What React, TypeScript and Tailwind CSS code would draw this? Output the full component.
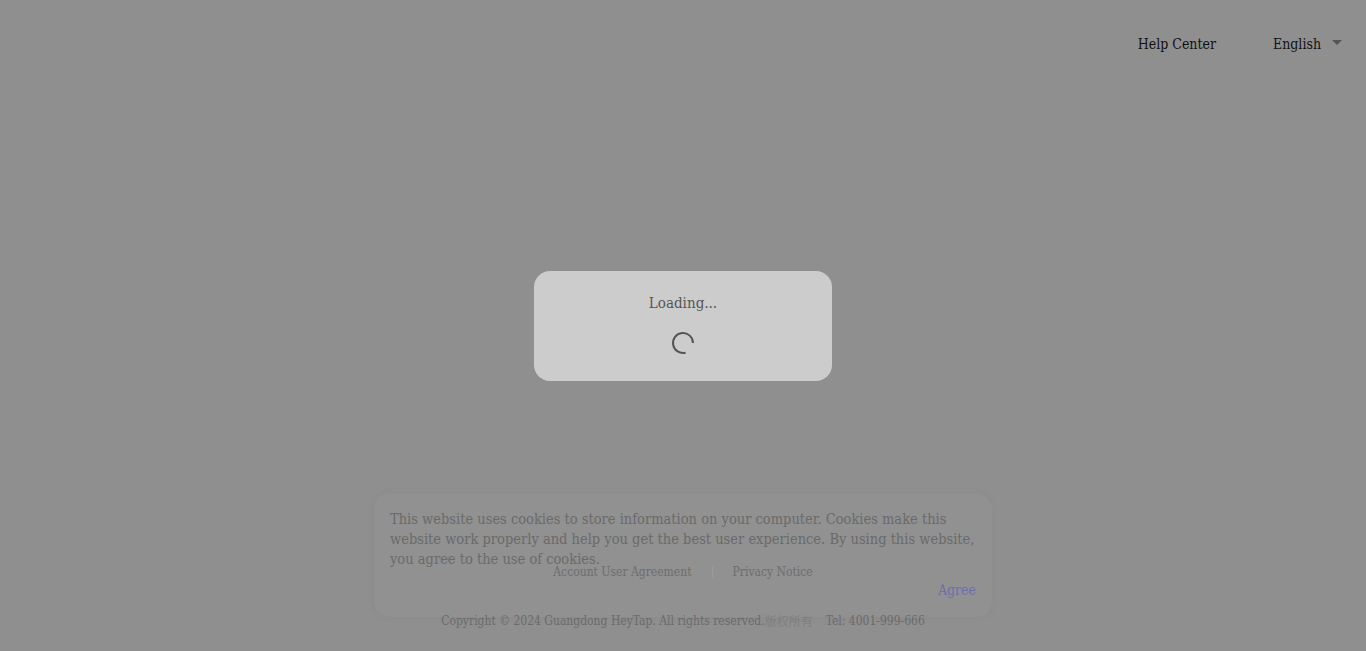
export default function App() {
  return (
    <div className="relative w-full h-[651px] overflow-hidden bg-[#8f8f8f] flex flex-col font-['DejaVu_Serif_Condensed','DejaVu_Serif',serif] font-stretch-condensed">
      <header className="flex items-center justify-end h-[88px] pr-[24px]">
        <span className="text-[14px] text-[#111] mr-[57px]">Help Center</span>
        <span className="text-[14px] text-[#111] mr-[11px]">English</span>
        <span className="w-0 h-0 border-l-[5px] border-r-[5px] border-t-[5px] border-l-transparent border-r-transparent border-t-[#555] -mt-[3px]" />
      </header>

      <main className="flex-1" />

      <footer className="flex flex-col items-center pb-[21px] text-[12px] text-[#6b6b6b]">
        <div className="flex items-center mb-[31px]">
          <span>Account User Agreement</span>
          <span className="mx-[20px] h-[12px] w-px bg-[#9a9a9a]" />
          <span>Privacy Notice</span>
        </div>
        <div className="flex items-center">
          <span>Copyright © 2024 Guangdong HeyTap. All rights reserved.</span>
          <span className="text-[#808080] font-['Noto_Sans_CJK_SC',sans-serif]">版权所有</span>
          <span className="ml-[13px]">Tel: 4001-999-666</span>
        </div>
      </footer>

      {/* cookie banner */}
      <div className="absolute left-1/2 -translate-x-1/2 bottom-[34px] w-[618px] h-[124px] rounded-[16px] bg-white/[0.02] shadow-[0_0_10px_rgba(0,0,0,0.04)] px-[16px] pt-[16px]">
        <p className="text-[14.5px] leading-[20px] text-[#6a6a6a]">
          This website uses cookies to store information on your computer. Cookies make this website work properly and help you get the best user experience. By using this website, you agree to the use of cookies.
        </p>
        <div className="flex justify-end mt-[11px]">
          <span className="text-[14px] text-[#6d70a6]">Agree</span>
        </div>
      </div>

      {/* loading dialog */}
      <div className="absolute left-1/2 top-1/2 -translate-x-1/2 -translate-y-1/2 w-[298px] h-[110px] rounded-[16px] bg-[#cccccc] flex flex-col items-center pt-[21px]">
        <span className="text-[15px] text-[#555]">Loading...</span>
        <svg className="mt-[17px]" width="24" height="24" viewBox="0 0 24 24">
          <path d="M22 12 A10 10 0 1 0 14.6 21.66" fill="none" stroke="#555" strokeWidth="2" />
        </svg>
      </div>
    </div>
  );
}
